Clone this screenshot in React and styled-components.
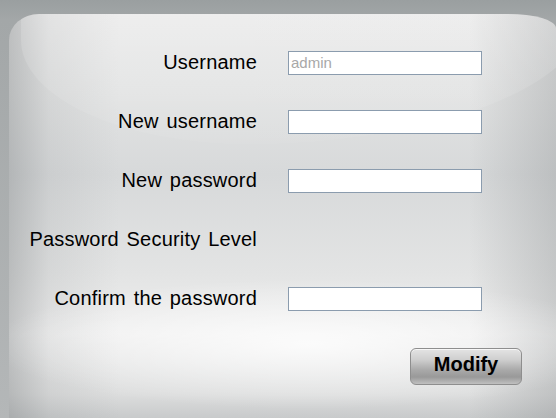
import styled, { createGlobalStyle } from 'styled-components'

const GlobalStyle = createGlobalStyle`
  html, body {
    margin: 0;
    padding: 0;
  }
  body {
    font-family: "Liberation Sans", Arial, sans-serif;
  }
`

const Frame = styled.div`
  width: 556px;
  height: 418px;
  overflow: hidden;
  background: linear-gradient(to bottom, #9a9fa0 0, #a3a7a8 20px, #b4b7b8 100%);
  padding-top: 14px;
  padding-left: 9px;
  box-sizing: border-box;
`

const Panel = styled.div`
  position: relative;
  height: 404px;
  border-radius: 30px 48px 0 0 / 26px 14px 0 0;
  background:
    radial-gradient(ellipse 320px 65px at 300px 330px, rgba(255, 255, 255, 0.8), rgba(255, 255, 255, 0) 100%),
    linear-gradient(to right, rgba(120, 124, 126, 0.38) 0, rgba(120, 124, 126, 0.12) 40px, rgba(120, 124, 126, 0) 110px, rgba(120, 124, 126, 0) 460px, rgba(120, 124, 126, 0.28) 100%),
    linear-gradient(to bottom, #eaeaea 0, #e2e3e3 80px, #d7d9da 160px, #e3e4e4 260px, #efefef 320px, #dcdddd 380px, #c8cacb 404px);
  overflow: hidden;

  &::before {
    content: '';
    position: absolute;
    left: 12px;
    right: -30px;
    top: 0;
    height: 130px;
    border-radius: 0 0 60% 40% / 0 0 100% 80%;
    background: linear-gradient(to bottom, rgba(255, 255, 255, 0.18), rgba(255, 255, 255, 0.04));
    pointer-events: none;
  }
`

const Form = styled.div`
  position: relative;
  margin-left: -9px;
  padding-top: 19px;
  display: grid;
  grid-template-columns: 257px 194px;
  grid-auto-rows: 59px;
  column-gap: 31px;
  align-items: center;
`

const Label = styled.div`
  text-align: right;
  font-size: 20px;
  letter-spacing: 0.2px;
  word-spacing: 2px;
  color: #000;
  white-space: nowrap;
`

const Field = styled.input`
  box-sizing: border-box;
  width: 194px;
  height: 24px;
  margin: 0;
  padding: 0 2px;
  border: 1px solid #8b9cae;
  background: #fff;
  font-family: "Liberation Sans", Arial, sans-serif;
  font-size: 15px;
  color: #a8a8a8;
  outline: none;
`

const Actions = styled.div`
  position: relative;
  display: flex;
  justify-content: flex-end;
  width: 513px;
  margin-top: 20px;
`

const Button = styled.button`
  width: 112px;
  height: 37px;
  border: 1px solid #8e8e8e;
  border-radius: 6px;
  background: linear-gradient(to bottom, #e4e4e4 0, #cfcfcf 30%, #a9a9a9 60%, #999 80%, #c0c0c0 100%);
  box-shadow: inset 0 1px 0 rgba(255, 255, 255, 0.7);
  font-family: "Liberation Sans", Arial, sans-serif;
  font-weight: bold;
  font-size: 20px;
  color: #000;
  padding: 0 0 4px;
  cursor: pointer;
`

const rows = [
  { label: 'Username', value: 'admin', readOnly: true },
  { label: 'New username' },
  { label: 'New password', type: 'password' },
  { label: 'Password Security Level', noField: true },
  { label: 'Confirm the password', type: 'password' },
]

function App() {
  return (
    <>
      <GlobalStyle />
      <Frame>
        <Panel>
          <Form>
            {rows.map((r) => [
              <Label key={r.label + '-l'}>{r.label}</Label>,
              r.noField ? (
                <div key={r.label + '-f'} />
              ) : (
                <Field
                  key={r.label + '-f'}
                  type={r.type || 'text'}
                  defaultValue={r.value}
                  readOnly={r.readOnly}
                />
              ),
            ])}
          </Form>
          <Actions>
            <Button>Modify</Button>
          </Actions>
        </Panel>
      </Frame>
    </>
  )
}

export default App
